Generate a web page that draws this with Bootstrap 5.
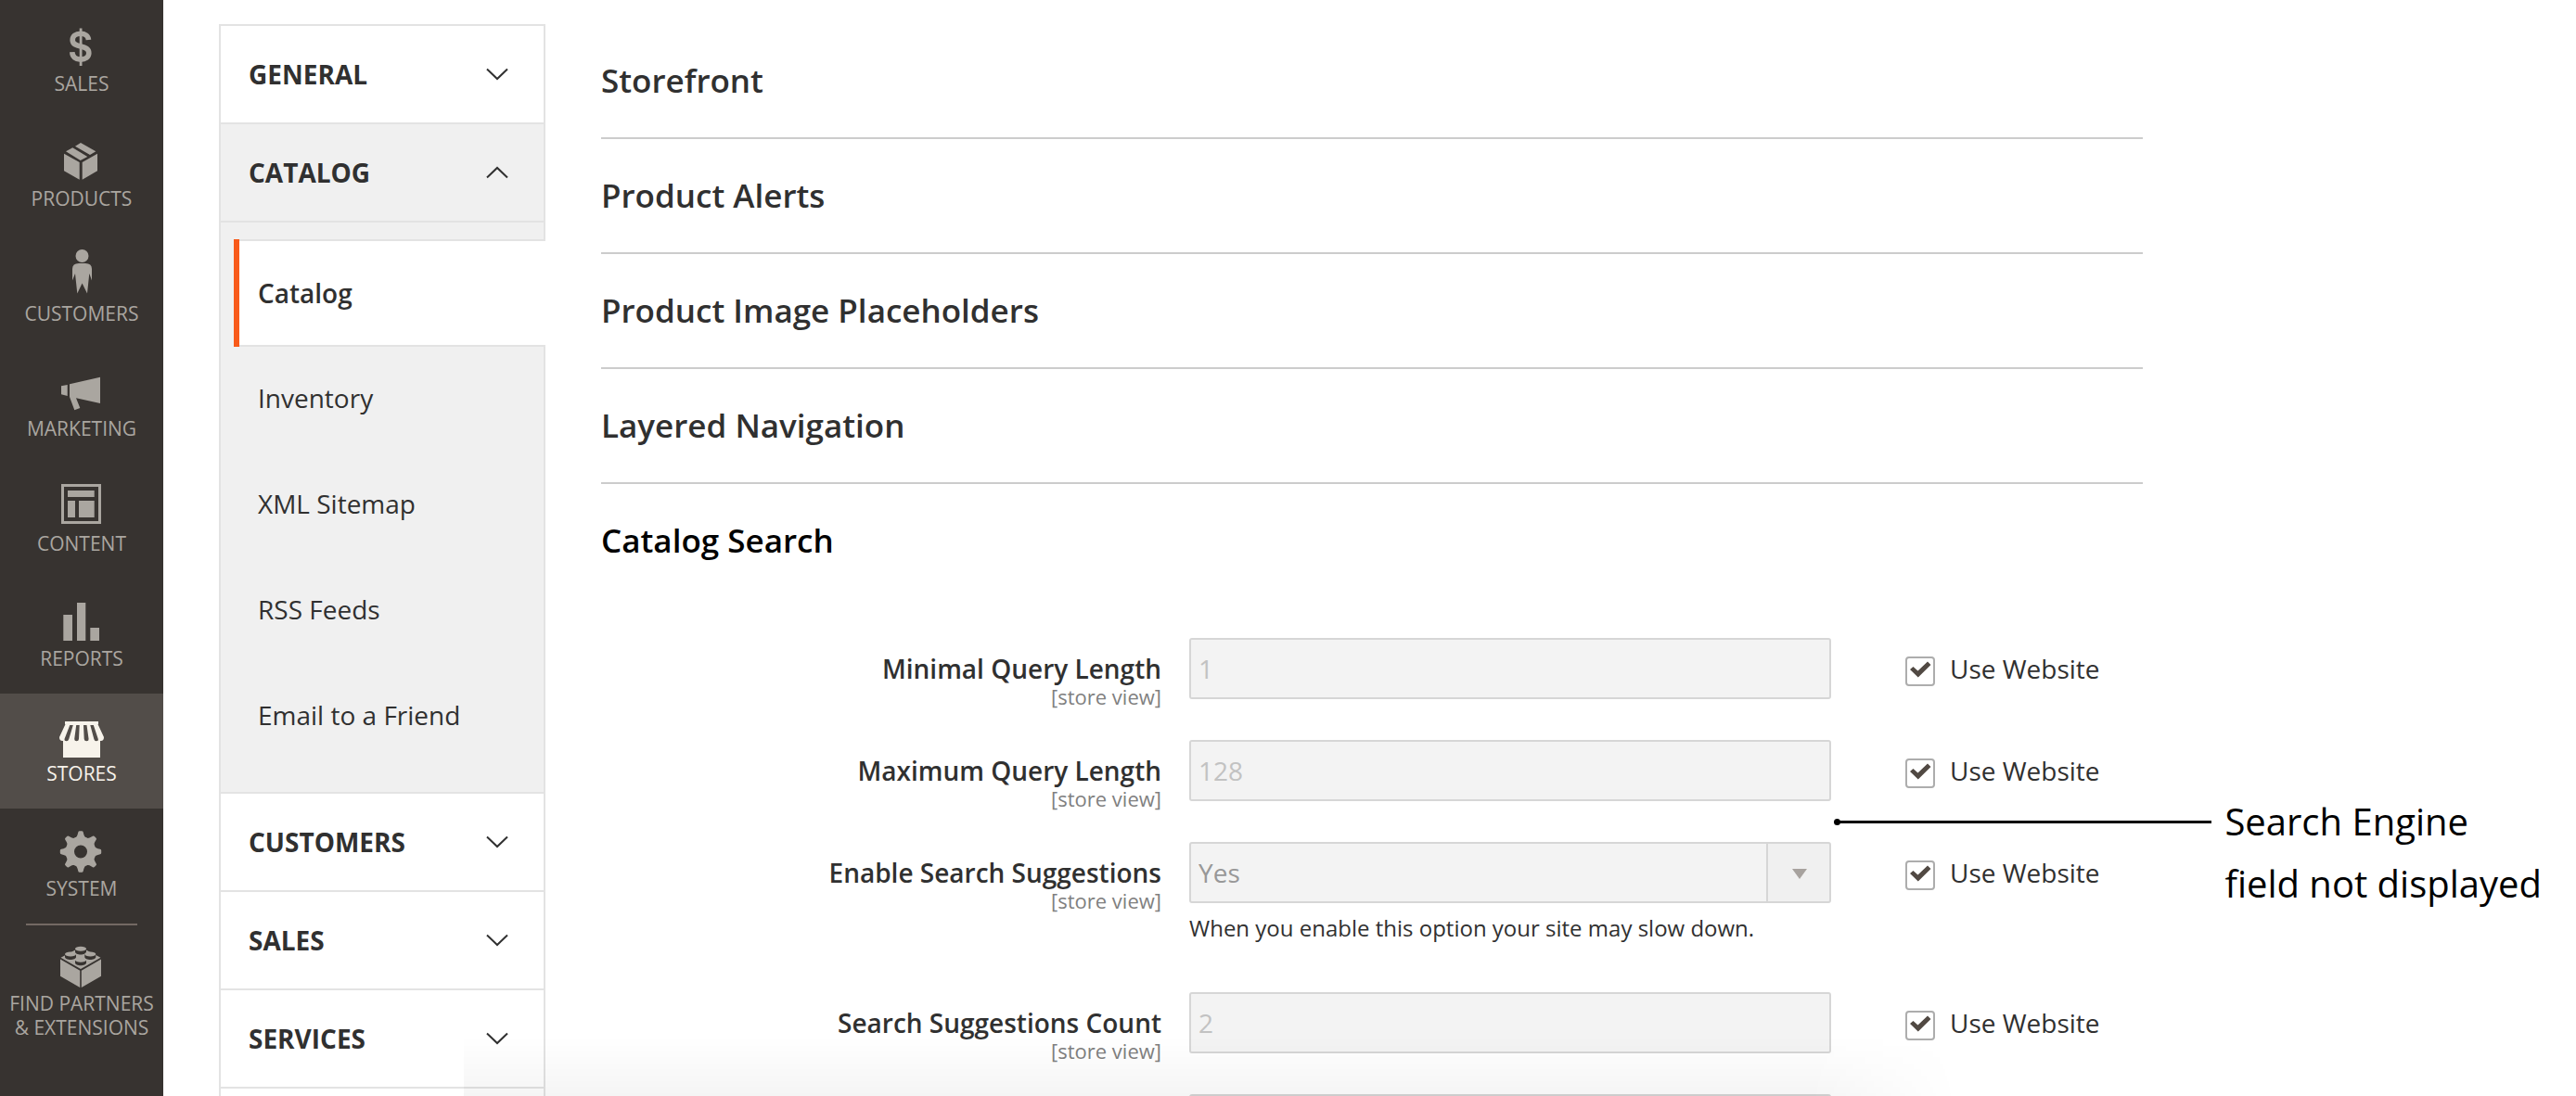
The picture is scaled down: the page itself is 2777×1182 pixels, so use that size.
<!DOCTYPE html>
<html lang="en">
<head>
<meta charset="utf-8">
<meta name="viewport" content="width=device-width, initial-scale=1">
<title>Configuration</title>
<link href="https://cdn.jsdelivr.net/npm/bootstrap@5.3.0/dist/css/bootstrap.min.css" rel="stylesheet">
<style>
  body { font-family: "Open Sans", "Noto Sans", sans-serif; font-size: 28px; color: #303030; background: #fff; }

  /* Admin menu */
  .admin-menu { width: 176px; padding-top: 4px; background: #373330; }
  .admin-menu .menu-link { min-height: 124px; padding-top: 15px; gap: 2px; color: #aaa6a0; font-size: 21px; line-height: 26px; white-space: nowrap; }
  .admin-menu .menu-link svg { width: 56px; height: 56px; fill: currentColor; }
  .admin-menu .menu-link.active { background: #524d49; color: #f7f3eb; }
  .admin-menu .menu-rule { margin: 0 28px -2px; border-top: 2px solid #736963; opacity: 1; }

  /* Section tabs */
  .tab-panel { width: 352px; margin: 26px 60px 0 60px; border: 2px solid #e3e3e3; border-bottom: 0; }
  .tab-head { height: 106px; padding: 0 38px 0 30px; border: 0; border-bottom: 2px solid #e3e3e3; background: #fff; color: #303030; font-weight: 700; }
  .tab-head svg { width: 24px; height: 14px; fill: none; stroke: #303030; stroke-width: 2; }
  .tab-head.open, .tab-items { background: #f0f0f0; }
  .tab-items { padding: 18px 0 26px; border-bottom: 2px solid #e3e3e3; }
  .tab-items a { height: 114px; padding-left: 40px; color: #303030; }
  .tab-items a.active { position: relative; height: 116px; margin: 0 -2px -2px 14px; padding-left: 26px; background: #fff; border: solid #e3e3e3; border-width: 2px 0; font-weight: 600; }
  .tab-items a.active::before { content: ""; position: absolute; top: -2px; bottom: -2px; left: 0; width: 6px; background: #f85a1a; }

  /* Settings */
  .settings { margin: 26px 467px 0 0; min-width: 0; }
  .section-title { height: 124px; margin: 0; border-bottom: 2px solid #ccc; color: #303030; font-size: 35px; font-weight: 600; }
  .section-title.open { border-bottom-color: transparent; color: #000; }
  .section-title button { border: 0; padding: 0; background: none; color: inherit; font: inherit; }
  .field-list { padding-top: 42px; }
  .field-row { display: grid; grid-template-columns: 634fr 692fr 336fr; padding-bottom: 35px; }
  .field-label { padding: 15px 30px 0 0; line-height: 36px; font-weight: 600; }
  .field-label small { font-size: 22px; line-height: 24px; font-weight: 400; color: #808080; }
  .field-row .form-control, .field-row .form-select { height: 66px; padding: 0 8px; border: 2px solid #d6d6d6; border-radius: 3px; background-color: #f3f3f3; color: #c2c2c2; font-size: 28px; opacity: 1; }
  .field-row .form-select { color: #989898; background-image: url("data:image/svg+xml,%3Csvg xmlns='http://www.w3.org/2000/svg' viewBox='0 0 68 62'%3E%3Cpath fill='%23f0f0f0' d='M0 0h68v62H0z'/%3E%3Cpath fill='%23d6d6d6' d='M0 0h2v62H0z'/%3E%3Cpath fill='%23a7a29e' d='M28 27h16l-8 11z'/%3E%3C/svg%3E"); background-size: 68px 62px; background-position: right center; }
  .field-note { padding: 9px 0 16px; margin: 0; font-size: 24px; line-height: 36px; }
  .inherit-cell { position: relative; padding: 14px 0 0 80px; }
  .inherit-cell .form-check { gap: 16px; min-height: 0; line-height: 38px; }
  .inherit-cell .form-check-input { float: none; width: 32px; height: 32px; margin: 6px 0 0; border: 2px solid #adadad; border-radius: 4px; background: #fff; flex-shrink: 0; }
  .inherit-cell .form-check-input:checked { border-color: #adadad; background: #fff url("data:image/svg+xml,%3Csvg xmlns='http://www.w3.org/2000/svg' viewBox='0 0 28 28'%3E%3Cpath fill='%23514943' d='M3 12l3.500-3L11.500 13.500 22 3.500 25.500 7 11.800 20.500z'/%3E%3C/svg%3E") center / 28px 28px no-repeat; }

  /* Callout over the form */
  .callout-note { position: absolute; top: 54px; left: 4px; right: -430px; gap: 14px; color: #000; font-size: 40px; line-height: 67px; white-space: nowrap; z-index: 2; }
  .callout-note .leader { position: relative; height: 3px; margin-top: 33px; background: #000; }
  .callout-note .leader::before { content: ""; position: absolute; left: -1px; top: -2px; width: 7px; height: 7px; border-radius: 50%; background: #000; }

  .bottom-shade { left: 18%; right: 24%; height: 64px; pointer-events: none; background: linear-gradient(rgba(0,0,0,0), rgba(0,0,0,.04)); -webkit-mask-image: linear-gradient(90deg, #000 90%, transparent); mask-image: linear-gradient(90deg, #000 90%, transparent); }
</style>
<script src="https://cdn.jsdelivr.net/npm/bootstrap@5.3.0/dist/js/bootstrap.bundle.min.js"></script>
</head>
<body>
<div class="d-flex vh-100 overflow-hidden">

  <nav class="admin-menu flex-shrink-0" aria-label="Admin">
    <a href="#" class="menu-link d-flex flex-column align-items-center text-center text-decoration-none">
      <svg viewBox="0 0 56 56"><path d="M35.500 24C35 19.500 31.500 17.300 27 17.300c-5.600 0-8.800 2.800-8.800 7 0 4.500 4 5.700 8.800 6.800 5.200 1.200 8.800 2.600 8.800 7.200 0 4.300-3.800 6.800-8.800 6.800-5.400 0-9-2.900-9.200-8" fill="none" stroke="currentColor" stroke-width="5.600"/><path d="M25.700 11.500h2.800V52h-2.800z"/></svg>
      <span>SALES</span></a>
    <a href="#" class="menu-link d-flex flex-column align-items-center text-center text-decoration-none">
      <svg viewBox="0 0 56 56"><path d="M11 20.300l7.300-4L34.300 26l-7.600 3.900zM21 14.700l6-3.700 16.300 9.300L37 24zM9 22.700L25.700 32v18.700L9 41.300zM45 22.700L28.700 32v18.700L45 41.300z"/></svg>
      <span>PRODUCTS</span></a>
    <a href="#" class="menu-link d-flex flex-column align-items-center text-center text-decoration-none">
      <svg viewBox="0 0 56 56"><circle cx="28.500" cy="9" r="7"/><path d="M18 35.500V23q0-6 7-6h7q7 0 7 6v12.500L36.300 28 34 49.500l-5.400-11-5.300 11L21 28z"/></svg>
      <span>CUSTOMERS</span></a>
    <a href="#" class="menu-link d-flex flex-column align-items-center text-center text-decoration-none">
      <svg viewBox="0 0 56 56"><path d="M6 25.300L12.700 24v12L6 34.300zM15 23.300l33-7.600V44l-26-5.700L26.300 49l-6 2.300L15 37z"/></svg>
      <span>MARKETING</span></a>
    <a href="#" class="menu-link d-flex flex-column align-items-center text-center text-decoration-none">
      <svg viewBox="0 0 56 56"><path d="M7.500 8.500h40v40h-40z" fill="none" stroke="currentColor" stroke-width="3"/><path d="M13 14h28.700v7H13zM13 25h8v18h-8zM25 25h16.700v18H25z"/></svg>
      <span>CONTENT</span></a>
    <a href="#" class="menu-link d-flex flex-column align-items-center text-center text-decoration-none">
      <svg viewBox="0 0 56 56"><path d="M8.300 24H18v28H8.300zM23 11h9.300v41H23zM37.300 38H47v14h-9.700z"/></svg>
      <span>REPORTS</span></a>
    <a href="#" class="menu-link active d-flex flex-column align-items-center text-center text-decoration-none" aria-current="page">
      <svg viewBox="0 0 56 56"><path d="M10 15h36v3h-.500L52 32q0 4.500-4 4v18H8V36q-4 .5-4-4l6.500-14H10z"/><path fill="#524d49" d="M15.300 19h3.500l-4.500 15q-.8 2.200-2.500 2.200-2.800 0-2.200-2.500zM22.200 19h3.500L25 34q-.2 2.200-2.500 2.200T20.200 34zM30 19h3.500L35.600 34q.2 2.200-2.200 2.200-2.500 0-2.700-2.200zM37.300 19h3.500l5 15q.5 2.200-2 2.200-2 0-2.500-2.200z"/></svg>
      <span>STORES</span></a>
    <a href="#" class="menu-link d-flex flex-column align-items-center text-center text-decoration-none">
      <svg viewBox="0 0 56 56"><circle cx="27" cy="31.500" r="11.700" fill="none" stroke="currentColor" stroke-width="9.400"/>
        <g><path id="tooth" d="M20.500 17.500Q23.200 16 24.300 10.500q.3-1.200 1.500-1.200h2.400q1.200 0 1.500 1.200Q30.800 16 33.500 17.500z"/>
        <use href="#tooth" transform="rotate(45 27 31.500)"/><use href="#tooth" transform="rotate(90 27 31.500)"/><use href="#tooth" transform="rotate(135 27 31.500)"/><use href="#tooth" transform="rotate(180 27 31.500)"/><use href="#tooth" transform="rotate(225 27 31.500)"/><use href="#tooth" transform="rotate(270 27 31.500)"/><use href="#tooth" transform="rotate(315 27 31.500)"/></g></svg>
      <span>SYSTEM</span></a>
    <hr class="menu-rule">
    <a href="#" class="menu-link d-flex flex-column align-items-center text-center text-decoration-none">
      <svg viewBox="0 0 56 56"><path d="M5 23.500l21.200 12.200V54L5 41.700zM49 23.500L27.800 35.700V54L49 41.700zM5.500 21.700L24 12h6l18.500 9.700L27 34z"/>
        <g fill="#373330"><path d="M21 12.500v3c0 4 12 4 12 0v-3zM10 18v3c0 4 12 4 12 0v-3zM31.300 18v3c0 4 12 4 12 0v-3zM21 24.500v2.700c0 4 12 4 12 0v-2.700z"/></g>
        <ellipse cx="27" cy="12.300" rx="6" ry="2.500"/><ellipse cx="16" cy="18" rx="6" ry="2.500"/><ellipse cx="37.300" cy="18" rx="6" ry="2.500"/><ellipse cx="27" cy="24.300" rx="6" ry="2.500"/></svg>
      <span>FIND PARTNERS<br>&amp; EXTENSIONS</span></a>
  </nav>

  <aside class="tab-panel d-flex flex-column flex-shrink-0" aria-label="Configuration sections">
    <button type="button" class="tab-head d-flex align-items-center justify-content-between flex-shrink-0">GENERAL <svg viewBox="0 0 24 14"><path d="M1 1.500l11 10.500L23 1.500"/></svg></button>
    <button type="button" class="tab-head open d-flex align-items-center justify-content-between flex-shrink-0" aria-expanded="true">CATALOG <svg viewBox="0 0 24 14"><path d="M1 12.500L12 2l11 10.500"/></svg></button>
    <div class="tab-items d-flex flex-column flex-shrink-0">
      <a href="#" class="active d-flex align-items-center text-decoration-none">Catalog</a>
      <a href="#" class="d-flex align-items-center text-decoration-none">Inventory</a>
      <a href="#" class="d-flex align-items-center text-decoration-none">XML Sitemap</a>
      <a href="#" class="d-flex align-items-center text-decoration-none">RSS Feeds</a>
      <a href="#" class="d-flex align-items-center text-decoration-none">Email to a Friend</a>
    </div>
    <button type="button" class="tab-head d-flex align-items-center justify-content-between flex-shrink-0">CUSTOMERS <svg viewBox="0 0 24 14"><path d="M1 1.500l11 10.500L23 1.500"/></svg></button>
    <button type="button" class="tab-head d-flex align-items-center justify-content-between flex-shrink-0">SALES <svg viewBox="0 0 24 14"><path d="M1 1.500l11 10.500L23 1.500"/></svg></button>
    <button type="button" class="tab-head d-flex align-items-center justify-content-between flex-shrink-0">SERVICES <svg viewBox="0 0 24 14"><path d="M1 1.500l11 10.500L23 1.500"/></svg></button>
  </aside>

  <main class="settings flex-grow-1">
    <h2 class="section-title d-flex align-items-center"><button type="button">Storefront</button></h2>
    <h2 class="section-title d-flex align-items-center"><button type="button">Product Alerts</button></h2>
    <h2 class="section-title d-flex align-items-center"><button type="button">Product Image Placeholders</button></h2>
    <h2 class="section-title d-flex align-items-center"><button type="button">Layered Navigation</button></h2>
    <h2 class="section-title open d-flex align-items-center"><button type="button" aria-expanded="true">Catalog Search</button></h2>

    <form class="field-list">
      <div class="field-row">
        <label class="field-label text-end" for="min-length">Minimal Query Length<small class="d-block">[store view]</small></label>
        <div><input class="form-control" type="text" id="min-length" value="1" disabled></div>
        <div class="inherit-cell"><div class="form-check d-flex p-0 m-0"><input class="form-check-input" type="checkbox" id="inherit-min" checked><label for="inherit-min">Use Website</label></div></div>
      </div>
      <div class="field-row">
        <label class="field-label text-end" for="max-length">Maximum Query Length<small class="d-block">[store view]</small></label>
        <div><input class="form-control" type="text" id="max-length" value="128" disabled></div>
        <div class="inherit-cell">
          <div class="form-check d-flex p-0 m-0"><input class="form-check-input" type="checkbox" id="inherit-max" checked><label for="inherit-max">Use Website</label></div>
          <div class="callout-note d-flex"><span class="leader flex-grow-1"></span><span>Search Engine<br>field not displayed</span></div>
        </div>
      </div>
      <div class="field-row">
        <label class="field-label text-end" for="suggestions">Enable Search Suggestions<small class="d-block">[store view]</small></label>
        <div><select class="form-select" id="suggestions" disabled><option>Yes</option></select>
          <p class="field-note">When you enable this option your site may slow down.</p></div>
        <div class="inherit-cell"><div class="form-check d-flex p-0 m-0"><input class="form-check-input" type="checkbox" id="inherit-suggest" checked><label for="inherit-suggest">Use Website</label></div></div>
      </div>
      <div class="field-row">
        <label class="field-label text-end" for="count">Search Suggestions Count<small class="d-block">[store view]</small></label>
        <div><input class="form-control" type="text" id="count" value="2" disabled></div>
        <div class="inherit-cell"><div class="form-check d-flex p-0 m-0"><input class="form-check-input" type="checkbox" id="inherit-count" checked><label for="inherit-count">Use Website</label></div></div>
      </div>
      <div class="field-row">
        <span></span>
        <div><input class="form-control" type="text" aria-label="Next setting" disabled></div>
      </div>
    </form>
  </main>
</div>
<div class="bottom-shade position-fixed bottom-0"></div>
</body>
</html>
